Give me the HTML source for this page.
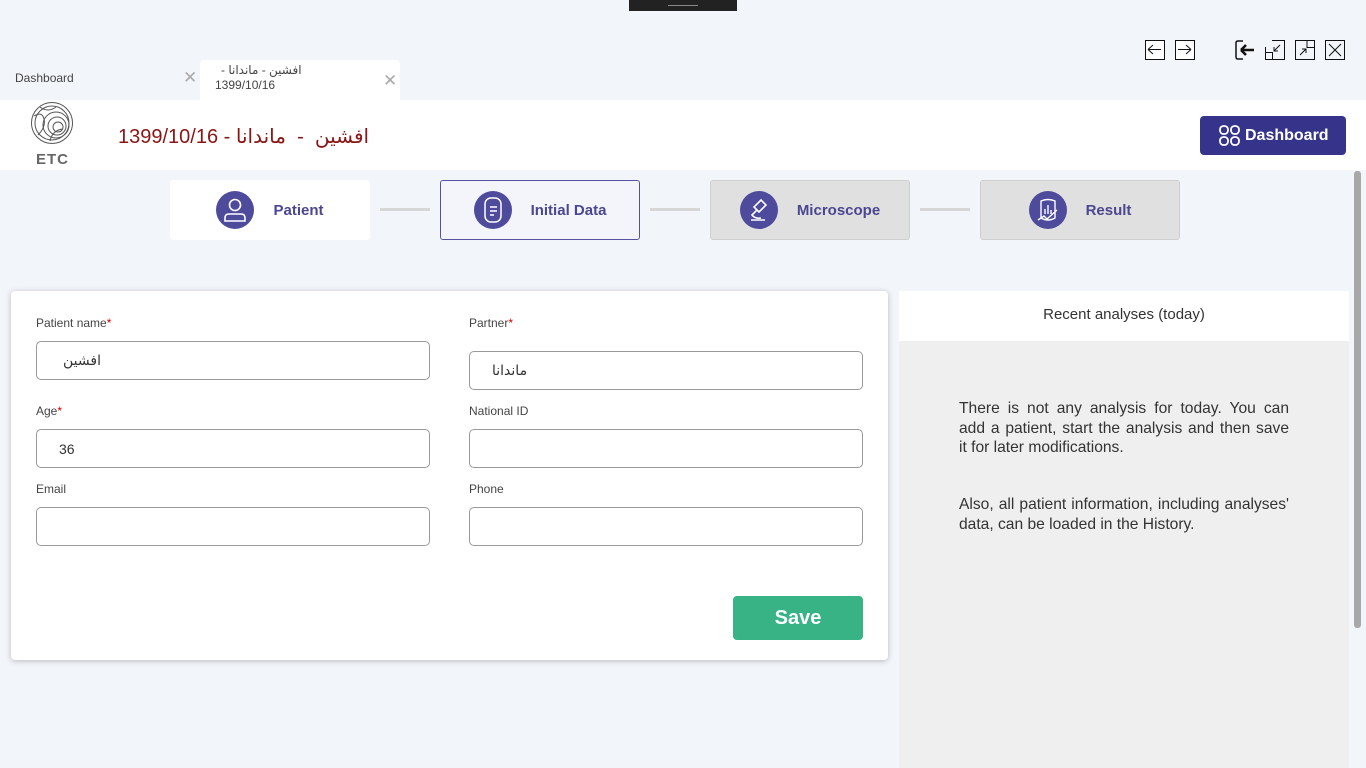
<!DOCTYPE html>
<html><head><meta charset="utf-8"><style>
*{box-sizing:border-box;margin:0;padding:0}
body{width:1366px;height:768px;overflow:hidden;background:#f2f5fa;font-family:"Liberation Sans","DejaVu Sans",sans-serif;position:relative;color:#333}
.a{position:absolute}
.win{width:20px;height:20px;border:1.5px solid #111;background:#fff;top:40px}
.step{top:180px;width:200px;height:60px;border-radius:3px;display:flex;align-items:center;justify-content:center}
.step .ic{width:38px;height:38px;border-radius:50%;background:#4e4b9c;margin-right:19px;display:flex;align-items:center;justify-content:center}
.step span{font-weight:bold;font-size:15px;color:#4a4790}
.conn{top:208px;width:50px;height:3px;background:#d7d7d7}
.lbl{font-size:12px;color:#444}
.lbl b{color:#c00;font-weight:normal}
.inp{width:394px;height:39px;border:1px solid #9a9a9a;border-radius:5px;background:#fff;font-size:14px;padding-left:26px;display:flex;align-items:center;color:#333}
</style></head><body>
<div class="a" style="left:629px;top:0;width:108px;height:11px;background:#222"><div class="a" style="left:39px;top:5px;width:30px;height:1px;background:#888"></div></div>

<div class="a win" style="left:1145px"><svg width="17" height="17"><path d="M2 8.5H15M2 8.5L7 4M2 8.5L7 13" stroke="#111" fill="none"/></svg></div>
<div class="a win" style="left:1175px"><svg width="17" height="17"><path d="M2 8.5H15M15 8.5L10 4M15 8.5L10 13" stroke="#111" fill="none"/></svg></div>
<div class="a" style="left:1235px;top:40px;width:20px;height:20px"><svg width="20" height="20"><path d="M8 1H3Q1 1 1 3V17Q1 19 3 19H8" stroke="#111" fill="none" stroke-width="1.5"/><path d="M6 10H19M6 10L11 5M6 10L11 15" stroke="#111" fill="none" stroke-width="2.5"/></svg></div>
<div class="a" style="left:1265px;top:40px;width:20px;height:20px"><svg width="20" height="20"><path d="M7 .5H19.5V19.5H.5V7M.5 12.5H7.5V19.5M15 5L9 11M9 7V11H13" stroke="#111" fill="none"/></svg></div>
<div class="a" style="left:1295px;top:40px;width:20px;height:20px"><svg width="20" height="20"><path d="M12 .5H19.5V7.5H12ZM12 .5H.5V19.5H19.5V8M5 15L11 9M7 9H11V13" stroke="#111" fill="none"/></svg></div>
<div class="a" style="left:1325px;top:40px;width:20px;height:20px;border:1px solid #111"><svg width="18" height="18"><path d="M3 3L15 15M15 3L3 15" stroke="#111"/></svg></div>

<div class="a" style="left:15px;top:71px;font-size:12px;color:#444">Dashboard</div>
<div class="a" style="left:183px;top:68px;font-size:17px;color:#aaa">✕</div>
<div class="a" style="left:200px;top:60px;width:200px;height:41px;background:#fff;border-radius:4px 4px 0 0"></div>
<div class="a" style="left:215px;top:63px;font-size:12px;color:#444;line-height:15px"><div style="padding-left:6px" dir="rtl">افشین  -  ماندانا -</div>1399/10/16</div>
<div class="a" style="left:383px;top:71px;font-size:17px;color:#aaa">✕</div>

<div class="a" style="left:0;top:100px;width:1366px;height:70px;background:#fff"></div>
<svg class="a" style="left:30px;top:101px" width="44" height="44" viewBox="0 0 44 44"><g fill="none" stroke="#555" stroke-width="1"><circle cx="22" cy="22" r="20.5"/><circle cx="22" cy="22" r="17"/><circle cx="26" cy="24" r="13"/><circle cx="27" cy="25" r="9"/><circle cx="28" cy="26" r="5"/><path d="M4 15Q12 10 14 18T8 34M10 6Q18 12 26 6M20 40Q22 30 32 28"/></g></svg>
<div class="a" style="left:36px;top:151px;font-size:15px;font-weight:bold;color:#666;letter-spacing:1px">ETC</div>
<div class="a" style="left:118px;top:124px;font-size:20px;color:#8b1414;white-space:pre">1399/10/16 - <span dir="rtl">ماندانا</span>  -  <span dir="rtl">افشین</span></div>
<div class="a" style="left:1200px;top:116px;width:146px;height:39px;background:#35348a;border-radius:4px;color:#fff;font-weight:bold;font-size:16px;display:flex;align-items:center;padding-left:19px"><svg width="21" height="21" style="margin-right:5px"><g fill="none" stroke="#fff" stroke-width="1.8"><rect x="1" y="1" width="8" height="8" rx="3.5"/><rect x="12" y="1" width="8" height="8" rx="3.5"/><rect x="1" y="12" width="8" height="8" rx="3.5"/><rect x="12" y="12" width="8" height="8" rx="3.5"/></g></svg>Dashboard</div>

<div class="a step" style="left:170px;background:#fff"><div class="ic"><svg width="24" height="26"><g fill="none" stroke="#fff" stroke-width="1.6"><circle cx="12" cy="8" r="5.5"/><path d="M2 24V21Q2 17 6 17H18Q22 17 22 21V24Z"/></g></svg></div><span>Patient</span></div>
<div class="a conn" style="left:380px"></div>
<div class="a step" style="left:440px;background:#f4f5fb;border:1px solid #5553a0"><div class="ic"><svg width="24" height="28"><g fill="none" stroke="#fff" stroke-width="1.5"><rect x="4" y="2" width="16" height="24" rx="6"/><path d="M9 11H16M9 15H16M9 19H13"/></g></svg></div><span>Initial Data</span></div>
<div class="a conn" style="left:650px"></div>
<div class="a step" style="left:710px;background:#e0e0e0;border:1px solid #cfcfcf"><div class="ic"><svg width="24" height="26"><g fill="none" stroke="#fff" stroke-width="1.6"><path d="M14 3L19 8L12 15L7 10ZM10 13L5 18Q8 22 14 21M4 23H18"/></g></svg></div><span>Microscope</span></div>
<div class="a conn" style="left:920px"></div>
<div class="a step" style="left:980px;background:#e0e0e0;border:1px solid #cfcfcf"><div class="ic"><svg width="26" height="28"><g fill="none" stroke="#fff" stroke-width="1.4"><path d="M6 5Q13 2 20 5V22Q13 26 6 22ZM10 18V13M13 18V9M16 18V14M3 24L9 20L12 23L22 14"/></g></svg></div><span>Result</span></div>

<div class="a" style="left:11px;top:291px;width:877px;height:369px;background:#fff;border-radius:4px;box-shadow:0 1px 6px rgba(0,0,0,.25)"></div>
<div class="a lbl" style="left:36px;top:316px">Patient name<b>*</b></div>
<div class="a inp" style="left:36px;top:341px"><span dir="rtl">افشین</span></div>
<div class="a lbl" style="left:36px;top:404px">Age<b>*</b></div>
<div class="a inp" style="left:36px;top:429px;padding-left:22px">36</div>
<div class="a lbl" style="left:36px;top:482px">Email</div>
<div class="a inp" style="left:36px;top:507px"></div>
<div class="a lbl" style="left:469px;top:316px">Partner<b>*</b></div>
<div class="a inp" style="left:469px;top:351px;padding-left:22px"><span dir="rtl">ماندانا</span></div>
<div class="a lbl" style="left:469px;top:404px">National ID</div>
<div class="a inp" style="left:469px;top:429px"></div>
<div class="a lbl" style="left:469px;top:482px">Phone</div>
<div class="a inp" style="left:469px;top:507px"></div>
<div class="a" style="left:733px;top:596px;width:130px;height:44px;background:#37b386;border-radius:4px;color:#fff;font-weight:bold;font-size:20px;display:flex;align-items:center;justify-content:center">Save</div>

<div class="a" style="left:899px;top:291px;width:450px;height:50px;background:#fff;font-size:15px;color:#333;text-align:center;line-height:48px">Recent analyses (today)</div>
<div class="a" style="left:899px;top:341px;width:450px;height:427px;background:#efefef"></div>
<div class="a" style="left:959px;top:399px;width:330px;font-size:15.6px;line-height:19.5px;color:#333;text-align:justify">There is not any analysis for today. You can add a patient, start the analysis and then save it for later modifications.</div>
<div class="a" style="left:959px;top:495px;width:330px;font-size:15.6px;line-height:19.5px;color:#333;text-align:justify">Also, all patient information, including analyses' data, can be loaded in the History.</div>
<div class="a" style="left:1354px;top:171px;width:7px;height:457px;background:#a8a8a8;border-radius:3px"></div>
</body></html>
